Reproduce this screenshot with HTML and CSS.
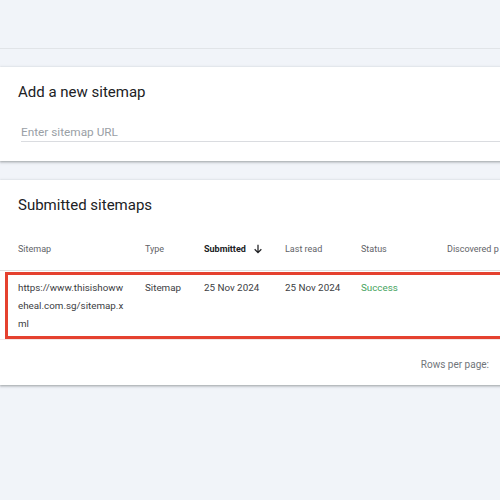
FILE: index.html
```html
<!DOCTYPE html>
<html>
<head>
<meta charset="utf-8">
<link rel="stylesheet" href="styles.css">
</head>
<body>
<div class="topbar"></div>
<main class="content">
  <section class="card add-card">
    <h2 class="card-title">Add a new sitemap</h2>
    <div class="input-field">Enter sitemap URL</div>
  </section>
  <section class="card list-card">
    <h2 class="card-title">Submitted sitemaps</h2>
    <div class="table-head cols">
      <div>Sitemap</div>
      <div>Type</div>
      <div class="sorted">Submitted
        <svg class="sort-arrow" viewBox="0 0 12 12" width="10" height="10"><path d="M6 1v9.5M2 6.3L6 10.3l4-4" fill="none" stroke="#202124" stroke-width="1.5"/></svg>
      </div>
      <div>Last read</div>
      <div>Status</div>
      <div class="clip">Discovered p</div>
    </div>
    <div class="row-highlight">
      <div class="table-row cols">
        <div class="url">https://www.thisishowweheal.com.sg/sitemap.xml</div>
        <div>Sitemap</div>
        <div>25 Nov 2024</div>
        <div>25 Nov 2024</div>
        <div class="success">Success</div>
        <div></div>
      </div>
    </div>
    <div class="table-foot">Rows per page:</div>
  </section>
</main>
</body>
</html>
```
FILE: styles.css
```css
html, body {
  margin: 0;
  padding: 0;
}
body {
  background: #f1f4f9;
  font-family: Roboto, "Liberation Sans", Arial, sans-serif;
  color: #202124;
  width: 500px;
  height: 500px;
  overflow: hidden;
}
.topbar {
  height: 48px;
  border-bottom: 1px solid #e1e4e8;
}
.content {
  padding-top: 18px;
  display: flex;
  flex-direction: column;
  gap: 19px;
}
.card {
  background: #fff;
  width: 520px;
  box-shadow: 0 1px 2px rgba(60,64,67,0.35), 0 1px 3px 1px rgba(60,64,67,0.12);
}
.card-title {
  margin: 0;
  padding: 15px 0 0 18px;
  font-size: 15px;
  line-height: 20px;
  font-weight: 400;
  color: #202124;
}
.add-card {
  padding-bottom: 19px;
}
.input-field {
  margin: 21px 0 0 21px;
  font-size: 11.8px;
  line-height: 18px;
  color: #9aa0a6;
  border-bottom: 1px solid #dadce0;
}
.cols {
  display: grid;
  grid-template-columns: 127px 59px 81px 76px 86px 1fr;
}
.table-head {
  margin-top: 27px;
  padding: 0 0 14px 18px;
  font-size: 9px;
  line-height: 14px;
  color: #5f6368;
  border-bottom: 1px solid #e0e0e0;
}
.table-head .sorted {
  color: #202124;
  font-weight: 700;
  display: flex;
  align-items: center;
  gap: 7px;
}
.sort-arrow {
  display: block;
}
.clip {
  white-space: nowrap;
}
.row-highlight {
  margin: 1px 0 0 5px;
  border: 3px solid #e5412f;
  border-right: none;
}
.table-row {
  padding: 4px 0 3px 10px;
  font-size: 9.8px;
  line-height: 18px;
  color: #3c4043;
}
.url {
  width: 108px;
  word-break: break-all;
}
.success {
  color: #46a35e;
}
.table-foot {
  border-top: 1px solid #f3e6e6;
  padding: 17px 31px 12px 0;
  font-size: 10px;
  line-height: 16px;
  color: #70757a;
  text-align: right;
}
```
